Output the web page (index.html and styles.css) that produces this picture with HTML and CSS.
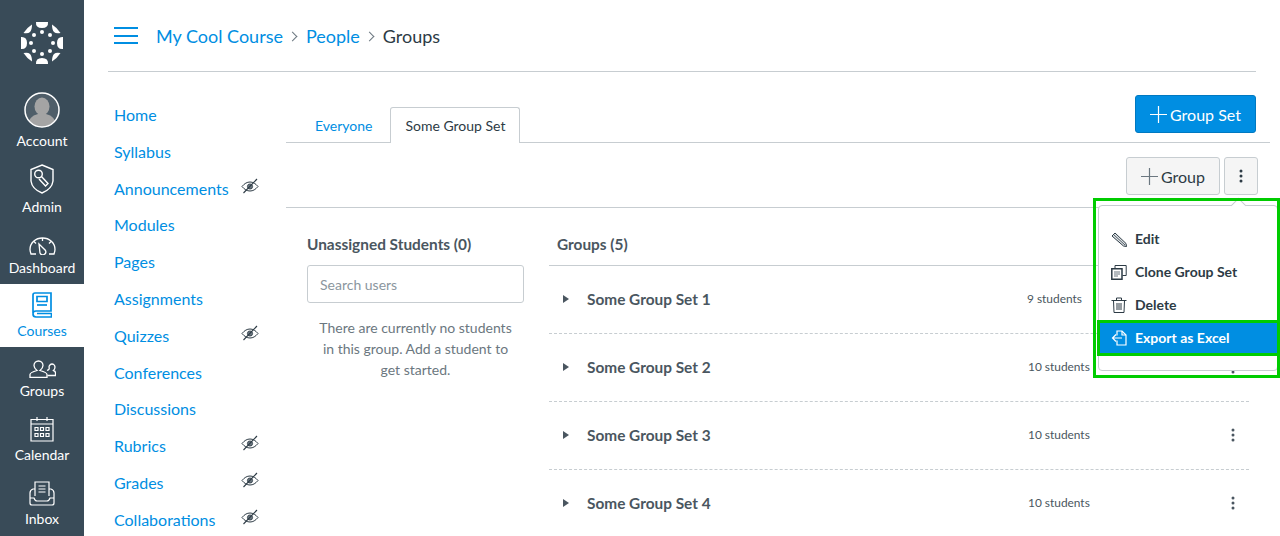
FILE: index.html
```html
<!DOCTYPE html>
<html lang="en">
<head>
<meta charset="utf-8">
<title>Groups</title>
<link rel="stylesheet" href="styles.css">
</head>
<body>
<svg class="defs" width="0" height="0" aria-hidden="true">
  <symbol id="eye" viewBox="0 0 18 16"><path d="M1 8.500C3.500 5.500 6 4 9 4s5.500 1.500 8 4.500C14.500 11.500 12 13 9 13S3.500 11.500 1 8.500Z" fill="none" stroke="#2d3b45" stroke-width="1"/><circle cx="9" cy="8.500" r="2.600" fill="#6b7780" stroke="#2d3b45" stroke-width=".8"/><path d="M2.500 15L16 1" stroke="#2d3b45" stroke-width="1.100"/></symbol>
  <symbol id="kebab" viewBox="0 0 4 14"><circle cx="2" cy="2" r="1.500"/><circle cx="2" cy="7" r="1.500"/><circle cx="2" cy="12" r="1.500"/></symbol>
</svg>
<nav class="rail">
  <a class="rail-logo" href="#">
    <svg width="44" height="44" viewBox="-22 -22 44 44" fill="#fff">
      <path d="M-6-21H6Q6.500-15 0-15Q-6.500-15-6-21Z"/><circle cx="0" cy="-11" r="2"/>
      <path d="M21-6V6Q15 6.500 15 0Q15-6.500 21-6Z"/><circle cx="11" cy="0" r="2"/>
      <path d="M-6 21H6Q6.500 15 0 15Q-6.500 15-6 21Z"/><circle cx="0" cy="11" r="2"/>
      <path d="M-21-6V6Q-15 6.500-15 0Q-15-6.500-21-6Z"/><circle cx="-11" cy="0" r="2"/>
      <path d="M10-18.500Q15-15.500 18.500-10Q14-9 12-11Q10-13 10-18.500Z"/><circle cx="8" cy="-8" r="2"/>
      <path d="M10 18.500Q15 15.500 18.500 10Q14 9 12 11Q10 13 10 18.500Z"/><circle cx="8" cy="8" r="2"/>
      <path d="M-10-18.500Q-15-15.500-18.500-10Q-14-9-12-11Q-10-13-10-18.500Z"/><circle cx="-8" cy="-8" r="2"/>
      <path d="M-10 18.500Q-15 15.500-18.500 10Q-14 9-12 11Q-10 13-10 18.500Z"/><circle cx="-8" cy="8" r="2"/>
    </svg>
  </a>
  <a class="rail-item" href="#">
    <svg width="36" height="36" viewBox="0 0 36 36"><defs><clipPath id="av"><circle cx="18" cy="18" r="16.500"/></clipPath></defs><circle cx="18" cy="18" r="17" fill="#4f5e69"/><g clip-path="url(#av)" fill="#a4a4a4"><ellipse cx="18" cy="14.500" rx="7.500" ry="9"/><path d="M3 36Q4 24 14 22H22Q32 24 33 36Z"/></g><circle cx="18" cy="18" r="17" fill="none" stroke="#fff" stroke-width="1.500"/></svg>
    <span>Account</span>
  </a>
  <a class="rail-item" href="#">
    <svg width="24" height="30" viewBox="0 0 24 30" fill="none" stroke="#fff" stroke-width="1.400"><path d="M12 1L23 5.500V17Q22 25 12 29Q2 25 1 17V5.500Z"/><circle cx="8.500" cy="10" r="3.800"/><path d="M11.500 12.500L18 19.500L15.500 22L9 15"/></svg>
    <span>Admin</span>
  </a>
  <a class="rail-item" href="#">
    <svg width="27" height="18" viewBox="0 0 27 18" fill="none" stroke="#fff" stroke-width="1.300"><path d="M7 17H2Q1 14 1 12.500C1 6 6.500 1 13.500 1S26 6 26 12.500Q26 14 25 17H20"/><path d="M13.500 1V4M5 4.500L7 6.500M22 4.500L20 6.500"/><path d="M10 7L16.500 13.500A3 3 0 0 1 11 16Z"/></svg>
    <span>Dashboard</span>
  </a>
  <a class="rail-item rail-item-active" href="#">
    <svg width="20" height="26" viewBox="0 0 20 26" fill="none" stroke="#008ee2" stroke-width="1.700"><path d="M1 21V3Q1 1 3 1H19V19H4Q1 19 1 22Q1 25 4 25H19.500V21.500H5"/><path d="M5 4.500H15V9.500H5Z"/><path d="M5 13H15"/></svg>
    <span>Courses</span>
  </a>
  <a class="rail-item" href="#">
    <svg width="27" height="18" viewBox="0 0 27 18" fill="none" stroke="#fff" stroke-width="1.300"><path d="M1 17.500V14.500Q1 12.500 8 10.500Q5 8 5 5.500C5 3 7 1 9.500 1S14 3 14 5.500Q14 8 11 10.500Q18 12.500 18 14.500V17.500Z"/><path d="M18 10.500Q21 9.500 20 7C20 5.500 21.500 4 23 4S26 5.500 26 7Q26 9 24.500 10.500Q26.500 11 26.500 13V15.500H18.500"/></svg>
    <span>Groups</span>
  </a>
  <a class="rail-item" href="#">
    <svg width="24" height="26" viewBox="0 0 24 26" fill="none" stroke="#fff" stroke-width="1.200"><path d="M1 3.500H23V25H1Z"/><path d="M1 8H23M7 1V5M17 1V5"/><path d="M5 11.500H8V14.500H5ZM10.500 11.500H13.500V14.500H10.500ZM16 11.500H19V14.500H16ZM5 17.500H8V20.500H5ZM10.500 17.500H13.500V20.500H10.500ZM16 17.500H19V20.500H16Z"/></svg>
    <span>Calendar</span>
  </a>
  <a class="rail-item" href="#">
    <svg width="26" height="25" viewBox="0 0 26 25" fill="none" stroke="#fff" stroke-width="1.200"><path d="M6 15V1H20V15"/><path d="M9.500 5H16.500M9.500 8H16.500M9.500 11H16.500"/><path d="M6 8H4Q1 9 1 12V22Q1 24 3 24H23Q25 24 25 22V12Q25 9 22 8H20"/><path d="M1 17H5Q6 20 8 20H18Q20 20 21 17H25"/></svg>
    <span>Inbox</span>
  </a>
</nav>

<div class="page">
  <header class="crumbs">
    <button class="burger" aria-label="Menu"><i></i><i></i><i></i></button>
    <a href="#">My Cool Course</a><b class="sep"></b>
    <a href="#">People</a><b class="sep"></b>
    <span>Groups</span>
  </header>

  <div class="columns">
    <ul class="course-nav">
      <li><a href="#">Home</a></li>
      <li><a href="#">Syllabus</a></li>
      <li><a href="#">Announcements</a><svg class="eye"><use href="#eye"/></svg></li>
      <li><a href="#">Modules</a></li>
      <li><a href="#">Pages</a></li>
      <li><a href="#">Assignments</a></li>
      <li><a href="#">Quizzes</a><svg class="eye"><use href="#eye"/></svg></li>
      <li><a href="#">Conferences</a></li>
      <li><a href="#">Discussions</a></li>
      <li><a href="#">Rubrics</a><svg class="eye"><use href="#eye"/></svg></li>
      <li><a href="#">Grades</a><svg class="eye"><use href="#eye"/></svg></li>
      <li><a href="#">Collaborations</a><svg class="eye"><use href="#eye"/></svg></li>
    </ul>

    <main class="content">
      <div class="tabbar">
        <a class="tab" href="#">Everyone</a>
        <a class="tab tab-active" href="#">Some Group Set</a>
        <a class="btn-primary" href="#"><svg width="17" height="17" viewBox="0 0 17 17"><path d="M8.500 0V17M0 8.500H17" stroke="#fff" stroke-width="1.200"/></svg>Group Set</a>
      </div>
      <div class="toolbar">
        <a class="btn" href="#"><svg width="17" height="17" viewBox="0 0 17 17"><path d="M8.500 0V17M0 8.500H17" stroke="#6b7780" stroke-width="1.200"/></svg>Group</a>
        <a class="btn btn-kebab" href="#" aria-label="Settings"><svg width="4" height="14" fill="#2d3b45"><use href="#kebab"/></svg></a>
      </div>
      <div class="panes">
        <section class="unassigned">
          <h2>Unassigned Students (0)</h2>
          <input class="search" placeholder="Search users">
          <p>There are currently no students in this group. Add a student to get started.</p>
        </section>
        <section class="groups">
          <h2 class="groups-title">Groups (5)</h2>
          <div class="group-row"><i class="arrow"></i><strong>Some Group Set 1</strong><span class="count count-narrow">9 students</span><svg class="row-kebab" width="4" height="14" fill="#4a5660"><use href="#kebab"/></svg></div>
          <div class="group-row"><i class="arrow"></i><strong>Some Group Set 2</strong><span class="count">10 students</span><svg class="row-kebab" width="4" height="14" fill="#4a5660"><use href="#kebab"/></svg></div>
          <div class="group-row"><i class="arrow"></i><strong>Some Group Set 3</strong><span class="count">10 students</span><svg class="row-kebab" width="4" height="14" fill="#4a5660"><use href="#kebab"/></svg></div>
          <div class="group-row"><i class="arrow"></i><strong>Some Group Set 4</strong><span class="count">10 students</span><svg class="row-kebab" width="4" height="14" fill="#4a5660"><use href="#kebab"/></svg></div>
        </section>
      </div>
    </main>
  </div>
</div>

<div class="menu">
  <i class="caret"></i>
  <a class="menu-item" href="#"><svg width="16" height="16" viewBox="0 0 16 16" fill="none" stroke="#2d3b45"><path d="M1 5L4 2L15 12.500L15.500 15.500L12.500 15Z" fill="#dfe3e6"/><path d="M2.500 3.500L14 14" stroke-width=".8"/></svg>Edit</a>
  <a class="menu-item" href="#"><svg width="16" height="16" viewBox="0 0 16 16" fill="none" stroke="#2d3b45"><path d="M.8 4.800H11V15.200H.8Z" stroke-width="1.500"/><path d="M4 4V1.500H15.200V11.500H11.500"/><path d="M3 8H9M3 10H9M3 12H7" stroke-width="1" stroke="#6b7780"/></svg>Clone Group Set</a>
  <a class="menu-item" href="#"><svg width="16" height="16" viewBox="0 0 16 16" fill="none" stroke="#2d3b45"><path d="M.5 3.500H15.500M5.500 3.500V1H10.500V3.500"/><path d="M2.500 3.500L3 15.500H13L13.500 3.500M6 6V13M8 6V13M10 6V13"/></svg>Delete</a>
  <a class="menu-item menu-item-hot" href="#"><svg width="16" height="16" viewBox="0 0 16 16" fill="none" stroke="#fff" stroke-width="1.200"><path d="M6 5.500V1H11L15 5V15H6V10.500"/><path d="M11 1V5H15"/><path d="M11 8H1.500M5 4.500L1.500 8L5 11.500"/></svg>Export as Excel</a>
</div>
<div class="mark mark-menu"></div>
<div class="mark mark-item"></div>
</body>
</html>
```

FILE: styles.css
```css
* { box-sizing: border-box; }
html, body { margin: 0; height: 536px; overflow: hidden; }
body {
  display: flex;
  position: relative;
  font-family: Lato, "Liberation Sans", sans-serif;
  color: #2d3b45;
  background: #fff;
}
a { text-decoration: none; color: #008ee2; }
.defs { position: absolute; }

/* global rail */
.rail {
  width: 84px;
  flex: none;
  height: 536px;
  background: #394b58;
  display: grid;
  grid-template-rows: 84px 73px 66px 61px 63px 60px 64px 64px;
}
.rail-logo { display: flex; justify-content: center; padding-top: 21px; }
.rail-item {
  display: flex;
  flex-direction: column;
  align-items: center;
  justify-content: flex-end;
  gap: 4px;
  padding-bottom: 7px;
  color: #fff;
  font-size: 14px;
  line-height: 18px;
}
.rail-item-active { background: #fff; color: #008ee2; }

/* page */
.page { flex: 1; min-width: 0; display: flex; flex-direction: column; }
.crumbs {
  height: 72px;
  margin: 0 24px;
  flex: none;
  display: flex;
  align-items: center;
  border-bottom: 1px solid #c7cdd1;
  font-size: 18px;
  padding-left: 6px;
}
.burger {
  width: 24px;
  height: 17px;
  margin-right: 18px;
  padding: 0;
  border: 0;
  background: none;
  display: flex;
  flex-direction: column;
  justify-content: space-between;
}
.burger i { display: block; height: 2px; background: #008ee2; }
.sep {
  width: 7px;
  height: 7px;
  margin: 1px 10px 0 6px;
  border-top: 1px solid #6b7780;
  border-right: 1px solid #6b7780;
  transform: rotate(45deg);
}
.columns { display: flex; flex: 1; min-height: 0; }

/* course nav */
.course-nav {
  list-style: none;
  margin: 0;
  padding: 25px 0 0 30px;
  width: 202px;
  flex: none;
  font-size: 16px;
}
.course-nav li {
  height: 36.800px;
  line-height: 36.800px;
  display: flex;
  justify-content: space-between;
  padding-right: 27px;
}
.eye { width: 18px; height: 16px; margin-top: 7px; }

/* content */
.content { flex: 1; min-width: 0; }
.tabbar {
  height: 71px;
  margin-right: 10px;
  display: flex;
  align-items: flex-end;
  border-bottom: 1px solid #c7cdd1;
  font-size: 14px;
}
.tab { height: 35px; line-height: 37px; padding: 0 14px; margin-left: 15px; margin-right: -15px; }
.tab + .tab { margin-left: 19px; }
.tab-active {
  background: #fff;
  color: #2d3b45;
  border: 1px solid #c7cdd1;
  border-bottom: 0;
  border-radius: 3px 3px 0 0;
  margin-bottom: -1px;
  height: 36px;
  line-height: 35px;
}
.btn-primary {
  margin-left: auto;
  margin-right: 14px;
  margin-bottom: 9px;
  height: 38px;
  width: 121px;
  display: flex;
  align-items: center;
  justify-content: center;
  gap: 3px;
  background: #008ee2;
  border: 1px solid #0079c1;
  border-radius: 3px;
  color: #fff;
  font-size: 16px;
}
.toolbar {
  height: 65px;
  margin-right: 10px;
  padding: 14px 12px 0 0;
  display: flex;
  justify-content: flex-end;
  align-items: flex-start;
  gap: 4px;
  border-bottom: 1px solid #c7cdd1;
}
.btn {
  height: 38px;
  width: 94px;
  display: flex;
  align-items: center;
  justify-content: center;
  gap: 3px;
  background: #f5f5f5;
  border: 1px solid #c7cdd1;
  border-radius: 3px;
  color: #2d3b45;
  font-size: 16px;
}
.btn-kebab { width: 34px; }
.panes { display: flex; padding: 26px 31px 0 21px; }
.unassigned { width: 217px; flex: none; margin-right: 25px; }
h2 { margin: 0; font-size: 15.400px; font-weight: 700; line-height: 21px; color: #4a5660; }
.search {
  display: block;
  width: 100%;
  height: 38px;
  margin-top: 10px;
  padding: 0 12px;
  border: 1px solid #c7cdd1;
  border-radius: 3px;
  font: 14px Lato, sans-serif;
}
.search::placeholder { color: #8b969e; }
.unassigned p {
  margin: 14px 0 0;
  padding: 0 10px;
  text-align: center;
  font-size: 14px;
  line-height: 21px;
  color: #6b7780;
}
.groups { flex: 1; min-width: 0; }
.groups-title { padding: 0 0 10px 8px; border-bottom: 1px solid #c7cdd1; }
.group-row {
  height: 68.100px;
  display: flex;
  align-items: center;
  border-bottom: 1px dashed #c7cdd1;
  padding: 0 14px 2px 14px;
  font-size: 14px;
}
.arrow {
  width: 0;
  height: 0;
  border-left: 6px solid #4a5660;
  border-top: 4px solid transparent;
  border-bottom: 4px solid transparent;
  margin-right: 18px;
}
.group-row strong { font-size: 15.400px; color: #4a5660; width: 441px; }
.count { font-size: 11.900px; color: #4a5660; flex: 1; }
.count-narrow { margin-left: -1px; }
.row-kebab { flex: none; }

/* overlays */
.menu {
  position: absolute;
  left: 1098px;
  top: 205px;
  width: 180px;
  height: 166px;
  padding-top: 16px;
  background: #fff;
  border: 1px solid #c7cdd1;
  border-radius: 4px;
}
.caret {
  position: absolute;
  left: 134px;
  top: -6px;
  width: 11px;
  height: 11px;
  background: #fff;
  border-left: 1px solid #c7cdd1;
  border-top: 1px solid #c7cdd1;
  transform: rotate(45deg);
}
.menu-item {
  display: flex;
  align-items: center;
  gap: 8px;
  height: 33px;
  padding-left: 12px;
  color: #2d3b45;
  font-size: 14px;
  font-weight: 700;
  position: relative;
}
.menu-item-hot { background: #008ee2; color: #fff; }
.mark { position: absolute; pointer-events: none; }
.mark-menu { left: 1093px; top: 198px; width: 187px; height: 180px; border: 3px solid #0c0; }
.mark-item { left: 1097px; top: 320px; width: 183px; height: 36px; border: 3px solid #0c0; }
```
